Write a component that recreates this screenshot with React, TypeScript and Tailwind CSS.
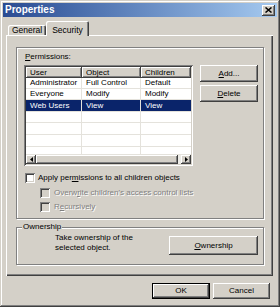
import React from "react";

const raised =
  "shadow-[inset_-1px_-1px_0_#404040,inset_1px_1px_0_#ffffff,inset_-2px_-2px_0_#808080,inset_2px_2px_0_#d4d0c8]";
const sunken =
  "shadow-[inset_1px_1px_0_#808080,inset_-1px_-1px_0_#ffffff,inset_2px_2px_0_#404040,inset_-2px_-2px_0_#d4d0c8]";
const etched =
  "border border-[#808080] shadow-[inset_1px_1px_0_#ffffff,1px_1px_0_#ffffff]";
const disabledText = "text-[#808080] [text-shadow:1px_1px_0_#ffffff]";

const rows = [
  ["Administrator", "Full Control", "Default"],
  ["Everyone", "Modify", "Modify"],
  ["Web Users", "View", "View"],
  ["", "", ""],
  ["", "", ""],
  ["", "", ""],
  ["", "", ""],
];
const rowHeights = ["h-[11px]", "h-[11px]", "h-[12px]", "h-[11px]", "h-[12px]", "h-[12px]", "h-[8px]"];

const Button = ({ className, children }: { className: string; children: React.ReactNode }) => (
  <div className={`flex items-center justify-center bg-[#d4d0c8] text-[8px] text-black ${raised} ${className}`}>
    {children}
  </div>
);

const Checkbox = ({ disabled }: { disabled?: boolean }) => (
  <div className={`w-[10px] h-[10px] shrink-0 ${disabled ? "bg-[#d4d0c8]" : "bg-white"} ${sunken}`} />
);

const Arrow = ({ dir }: { dir: "left" | "right" }) => (
  <div className={`w-[10px] h-full flex items-center justify-center bg-[#d4d0c8] ${raised}`}>
    <svg width="3" height="5" viewBox="0 0 3 5">
      {dir === "left" ? <polygon points="3,0 3,5 0,2.5" fill="#000" /> : <polygon points="0,0 0,5 3,2.5" fill="#000" />}
    </svg>
  </div>
);

const HeaderCell = ({ className, children }: { className: string; children: React.ReactNode }) => (
  <div className={`h-full flex items-center pl-[4px] text-[8px] bg-[#d4d0c8] ${raised} ${className}`}>{children}</div>
);

export default function App() {
  return (
    <div className="w-[280px] h-[307px] bg-[#d4d0c8] p-[3px] flex flex-col font-['Liberation_Sans',Arial,sans-serif] text-black shadow-[inset_-1px_-1px_0_#404040,inset_1px_1px_0_#d4d0c8,inset_-2px_-2px_0_#808080,inset_2px_2px_0_#ffffff]">
      {/* title bar */}
      <div className="h-[14px] flex items-center px-[2px] bg-linear-to-r from-[#2a4b92] to-[#a6caf0]">
        <span className="text-white font-bold text-[10px] leading-none">Properties</span>
        <div className={`ml-auto w-[13px] h-[11px] flex items-center justify-center bg-[#d4d0c8] ${raised}`}>
          <svg width="7" height="6" viewBox="0 0 7 6">
            <path d="M0.5 0.5 L6.5 5.5 M6.5 0.5 L0.5 5.5" stroke="#000" strokeWidth="1.5" />
          </svg>
        </div>
      </div>

      <div className="flex flex-col pl-[3px] pr-[4px]">
        {/* tabs */}
        <div className="mt-[4px] h-[14px] flex items-end">
          <div className="ml-[2px] w-[38px] h-[10px] flex items-center justify-center text-[8.5px] rounded-t-[2px] shadow-[inset_1px_1px_0_#ffffff,inset_-1px_0_0_#404040,inset_-2px_0_0_#808080]">
            General
          </div>
          <div className="relative z-10 -mb-[1px] w-[43px] h-[15px] flex items-start pt-[3px] justify-center text-[8.5px] bg-[#d4d0c8] rounded-t-[2px] shadow-[inset_1px_1px_0_#ffffff,inset_-1px_0_0_#404040,inset_-2px_0_0_#808080]">
            Security
          </div>
        </div>

        {/* panel */}
        <div className="h-[241px] flex flex-col shadow-[inset_1px_1px_0_#ffffff,inset_-1px_-1px_0_#404040,inset_-2px_-2px_0_#808080]">
          {/* permissions group */}
          <div className={`mt-[12px] ml-[10px] w-[248px] h-[172px] ${etched} flex flex-col pl-[7px] pt-[4px]`}>
            <div className="ml-[1px] h-[10px] leading-[10px] text-[8px]">
              <span className="underline">P</span>ermissions:
            </div>
            <div className="mt-[3px] flex items-start">
              <div className={`w-[169px] h-[101px] bg-white p-[2px] flex flex-col ${sunken}`}>
                <div className="h-[11px] flex">
                  <HeaderCell className="w-[56px]">User</HeaderCell>
                  <HeaderCell className="w-[59px]">Object</HeaderCell>
                  <HeaderCell className="flex-1">Children</HeaderCell>
                </div>
                {rows.map((r, i) => (
                  <div
                    key={i}
                    className={`${rowHeights[i]} flex text-[8px] border-b border-[#e4e2dc] ${
                      i === 2 ? "bg-[#0a246a] text-white" : ""
                    }`}
                  >
                    <div className="w-[56px] pl-[4px] flex items-center border-r border-[#e4e2dc]">{r[0]}</div>
                    <div className="w-[59px] pl-[4px] flex items-center border-r border-[#e4e2dc]">{r[1]}</div>
                    <div className="flex-1 pl-[4px] flex items-center">{r[2]}</div>
                  </div>
                ))}
                <div className="h-[9px] flex">
                  <Arrow dir="left" />
                  <div className={`w-[142px] h-full bg-[#d4d0c8] ${raised}`} />
                  <div className="flex-1 bg-[#ecebe6]" />
                  <Arrow dir="right" />
                </div>
              </div>
              <div className="ml-[7px] flex flex-col">
                <Button className="w-[58px] h-[17px]">
                  <span>
                    <span className="underline">A</span>dd...
                  </span>
                </Button>
                <Button className="mt-[3px] w-[58px] h-[17px]">
                  <span>
                    <span className="underline">D</span>elete
                  </span>
                </Button>
              </div>
            </div>

            <div className="mt-[7px] ml-[1px] h-[10px] flex items-center gap-[3px] text-[8px]">
              <Checkbox />
              <span>
                Apply per<span className="underline">m</span>issions to all children objects
              </span>
            </div>
            <div className={`mt-[5px] ml-[16px] h-[10px] flex items-center gap-[4px] text-[8px] ${disabledText}`}>
              <Checkbox disabled />
              <span>
                Overw<span className="underline">r</span>ite children's access control lists
              </span>
            </div>
            <div className={`mt-[4px] ml-[16px] h-[10px] flex items-center gap-[4px] text-[8px] ${disabledText}`}>
              <Checkbox disabled />
              <span>
                R<span className="underline">e</span>cursively
              </span>
            </div>
          </div>

          {/* ownership group */}
          <div className={`relative mt-[8px] ml-[10px] w-[248px] h-[38px] ${etched} flex items-start`}>
            <span className="absolute -top-[6px] left-[5px] px-[1px] bg-[#d4d0c8] text-[8px] leading-[10px]">
              Ownership
            </span>
            <div className="ml-[38px] mt-[5px] text-[8px] leading-[10px]">
              Take ownership of the
              <br />
              selected object.
            </div>
            <Button className="ml-auto mr-[5px] mt-[8px] w-[89px] h-[19px]">
              <span>
                <span className="underline">O</span>wnership
              </span>
            </Button>
          </div>
        </div>

        {/* dialog buttons */}
        <div className="mt-[7px] flex justify-end gap-[3px] pr-[3px]">
          <div className="w-[58px] h-[16px] border border-black">
            <Button className="w-full h-full">OK</Button>
          </div>
          <Button className="w-[57px] h-[16px]">Cancel</Button>
        </div>
      </div>
    </div>
  );
}
